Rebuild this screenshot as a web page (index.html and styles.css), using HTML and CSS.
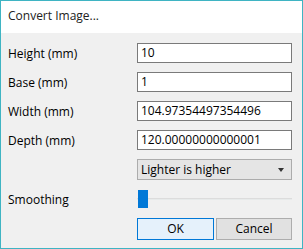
FILE: index.html
```html
<!DOCTYPE html>
<html>
<head>
<meta charset="utf-8">
<link rel="stylesheet" href="styles.css">
</head>
<body>
<div class="window">
  <div class="titlebar">Convert Image...</div>
  <div class="content">
    <div class="row field">
      <label class="label">Height (mm)</label>
      <div class="input">10</div>
    </div>
    <div class="row field">
      <label class="label">Base (mm)</label>
      <div class="input">1</div>
    </div>
    <div class="row field">
      <label class="label">Width (mm)</label>
      <div class="input">104.97354497354496</div>
    </div>
    <div class="row field">
      <label class="label">Depth (mm)</label>
      <div class="input">120.00000000000001</div>
    </div>
    <div class="row combo-row">
      <span class="label"></span>
      <div class="combo"><span>Lighter is higher</span><span class="arrow"></span></div>
    </div>
    <div class="row slider-row">
      <span class="label">Smoothing</span>
      <div class="slider"><div class="track"></div><div class="thumb"></div></div>
    </div>
    <div class="row buttons-row">
      <span class="label"></span>
      <div class="buttons">
        <div class="btn btn-ok">OK</div>
        <div class="btn btn-cancel">Cancel</div>
      </div>
    </div>
  </div>
</div>
</body>
</html>
```
FILE: styles.css
```css
html, body {
  margin: 0;
  padding: 0;
  background: #ffffff;
}
.window {
  width: 303px;
  height: 249px;
  box-sizing: border-box;
  border: 1px solid #3fb4c3;
  display: flex;
  flex-direction: column;
  font-family: "Open Sans", "Noto Sans", sans-serif;
  font-size: 12px;
  color: #000;
}
.titlebar {
  height: 32px;
  flex: none;
  background: #ffffff;
  color: #222;
  padding-left: 7px;
  line-height: 30px;
  font-size: 12px;
}
.content {
  flex: 1;
  background: #f0f0f0;
  padding: 10px 10px 0 7px;
  display: flex;
  flex-direction: column;
}
.row {
  display: flex;
  align-items: center;
}
.label {
  width: 129px;
  flex: none;
}
.field {
  height: 20px;
  margin-bottom: 9px;
}
.input {
  width: 155px;
  height: 20px;
  box-sizing: border-box;
  border: 1px solid #7a7a7a;
  background: #fff;
  padding-left: 3px;
  line-height: 18px;
  white-space: nowrap;
  overflow: hidden;
}
.combo-row {
  height: 21px;
}
.combo {
  width: 155px;
  height: 21px;
  box-sizing: border-box;
  border: 1px solid #acacac;
  background: #e5e5e5;
  padding-left: 3px;
  padding-right: 7px;
  display: flex;
  align-items: center;
  justify-content: space-between;
}
.arrow {
  width: 0;
  height: 0;
  border-left: 3px solid transparent;
  border-right: 3px solid transparent;
  border-top: 4px solid #333;
}
.slider-row {
  margin-top: 10px;
  height: 18px;
}
.slider {
  position: relative;
  width: 155px;
  height: 18px;
}
.track {
  position: absolute;
  left: 0;
  right: 0;
  top: 8px;
  height: 2px;
  background: #e7eaea;
  border-top: 1px solid #dcdcdc;
  box-sizing: border-box;
}
.thumb {
  position: absolute;
  left: 1px;
  top: 0;
  width: 10px;
  height: 18px;
  background: #0078d7;
}
.buttons-row {
  margin-top: 10px;
}
.buttons {
  display: flex;
  gap: 2px;
}
.btn {
  height: 22px;
  box-sizing: border-box;
  line-height: 20px;
  text-align: center;
}
.btn-ok {
  width: 77px;
  border: 1px solid #0078d7;
  background: #e5f1fb;
}
.btn-cancel {
  width: 76px;
  border: 1px solid #adadad;
  background: #e1e1e1;
}
```
